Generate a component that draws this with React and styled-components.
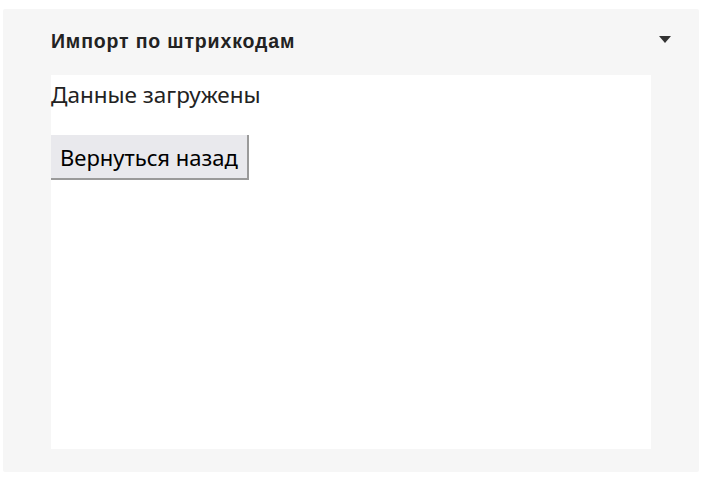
import { useState } from "react";
import styled, { createGlobalStyle } from "styled-components";

const GlobalStyle = createGlobalStyle`
  body {
    margin: 0;
    background-color: white;
    font-family: "Noto Sans", "Open Sans", sans-serif;
  }
`;

function App() {
  const [open, setOpen] = useState(true);

  return (
    <Page>
      <GlobalStyle />
      <Panel>
        <Header onClick={() => setOpen(!open)}>
          <Title>Импорт по штрихкодам</Title>
          <Caret $open={open} />
        </Header>
        {open && (
          <Content>
            <Message>Данные загружены</Message>
            <BackButton>Вернуться назад</BackButton>
          </Content>
        )}
      </Panel>
    </Page>
  );
}

const Page = styled.div`
  padding: 9px 4px 5px 3px;
`;

const Panel = styled.div`
  background-color: #f6f6f6;
  border-radius: 2px;
  padding: 0 48px 23px 48px;
`;

const Header = styled.div`
  height: 66px;
  display: flex;
  align-items: center;
  justify-content: space-between;
  cursor: pointer;
`;

const Title = styled.h3`
  margin: 0 0 2px;
  font-family: "Liberation Sans", Arial, sans-serif;
  font-size: 19.5px;
  letter-spacing: 0.85px;
  font-weight: bold;
  color: #222;
`;

const Caret = styled.span`
  width: 0;
  height: 0;
  margin-right: -20px;
  margin-bottom: 6px;
  border-left: 6px solid transparent;
  border-right: 6px solid transparent;
  border-top: 7px solid #333;
  transform: ${(p) => (p.$open ? "none" : "rotate(180deg)")};
`;

const Content = styled.div`
  height: 374px;
  box-sizing: border-box;
  background-color: white;
  display: flex;
  flex-direction: column;
  align-items: flex-start;
`;

const Message = styled.p`
  margin: 5px 0 0;
  font-size: 22.5px;
  line-height: 30px;
  color: #222;
`;

const BackButton = styled.button`
  margin-top: 25px;
  height: 45px;
  padding: 0 9px;
  font-family: "Noto Sans", "Open Sans", sans-serif;
  font-size: 22px;
  color: black;
  background-color: #e9e9ed;
  border: none;
  border-right: 2px solid #9a9a9a;
  border-bottom: 2px solid #9a9a9a;
  border-radius: 0;
  cursor: pointer;
`;

export default App;
